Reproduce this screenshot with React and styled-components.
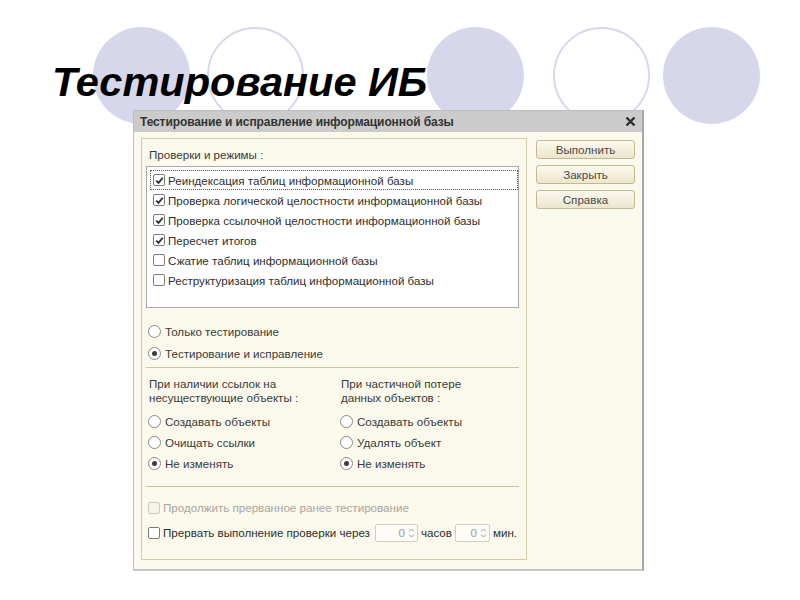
import React from 'react';
import styled, { createGlobalStyle, css } from 'styled-components';

const GlobalStyle = createGlobalStyle`
    html, body {
        margin: 0;
        padding: 0;
        background: #ffffff;
    }
    body {
        font-family: 'Liberation Sans', Arial, sans-serif;
    }
`;

const checks = [
    { label: 'Реиндексация таблиц информационной базы', checked: true, focused: true },
    { label: 'Проверка логической целостности информационной базы', checked: true },
    { label: 'Проверка ссылочной целостности информационной базы', checked: true },
    { label: 'Пересчет итогов', checked: true },
    { label: 'Сжатие таблиц информационной базы', checked: false },
    { label: 'Реструктуризация таблиц информационной базы', checked: false },
];

// кружки на фоне слайда
const circles = [
    { offset: 93, filled: true },
    { offset: 17, filled: false },
    { offset: 123, filled: true },
    { offset: 29, filled: false },
    { offset: 13, filled: true },
];

function CheckBox({ checked, disabled }) {
    return (
        <Box disabled={disabled}>
            {checked && (
                <svg width="9" height="9" viewBox="0 0 9 9">
                    <path
                        d="M1.2 4.6 L3.5 6.9 L7.8 1.8"
                        fill="none"
                        stroke="#2b2b2b"
                        strokeWidth="1.7"
                    />
                </svg>
            )}
        </Box>
    );
}

function Radio({ checked, label, tall }) {
    return (
        <RadioRow tall={tall}>
            <RadioCircle>{checked && <RadioDot />}</RadioCircle>
            <span>{label}</span>
        </RadioRow>
    );
}

function Spin({ width }) {
    return (
        <SpinBox width={width}>
            <SpinValue>0</SpinValue>
            <SpinArrows>
                <svg width="7" height="12" viewBox="0 0 7 12">
                    <path d="M1 4.5 L3.5 2 L6 4.5" fill="none" stroke="#9a9a9a" strokeWidth="1" />
                    <path d="M1 7.5 L3.5 10 L6 7.5" fill="none" stroke="#9a9a9a" strokeWidth="1" />
                </svg>
            </SpinArrows>
        </SpinBox>
    );
}

function App() {
    return (
        <>
            <GlobalStyle />
            <Slide>
                <Header>
                    <CircleRow>
                        {circles.map((c, i) => (
                            <Circle key={i} offset={c.offset} filled={c.filled} />
                        ))}
                    </CircleRow>
                    <Title>Тестирование ИБ</Title>
                </Header>
                <Dialog>
                    <TitleBar>
                        <TitleText>Тестирование и исправление информационной базы</TitleText>
                        <Close>
                            <svg width="11" height="11" viewBox="0 0 11 11">
                                <path d="M1.5 1.5 L9.5 9.5 M9.5 1.5 L1.5 9.5" stroke="#2e2e2e" strokeWidth="2.4" />
                            </svg>
                        </Close>
                    </TitleBar>
                    <Body>
                        <Frame>
                            <Caption>Проверки и режимы :</Caption>
                            <ListBox>
                                {checks.map(item => (
                                    <ListItem key={item.label} focused={item.focused}>
                                        <CheckBox checked={item.checked} />
                                        <span>{item.label}</span>
                                    </ListItem>
                                ))}
                            </ListBox>
                            <ModeGroup>
                                <Radio label="Только тестирование" tall />
                                <Radio label="Тестирование и исправление" checked tall />
                            </ModeGroup>
                            <Separator gap={3} />
                            <Columns>
                                <Column>
                                    <ColumnTitle>
                                        При наличии ссылок на
                                        <br />
                                        несуществующие объекты :
                                    </ColumnTitle>
                                    <Radio label="Создавать объекты" />
                                    <Radio label="Очищать ссылки" />
                                    <Radio label="Не изменять" checked />
                                </Column>
                                <Column>
                                    <ColumnTitle>
                                        При частичной потере
                                        <br />
                                        данных объектов :
                                    </ColumnTitle>
                                    <Radio label="Создавать объекты" />
                                    <Radio label="Удалять объект" />
                                    <Radio label="Не изменять" checked />
                                </Column>
                            </Columns>
                            <Separator gap={12} />
                            <OptionRow disabled first>
                                <CheckBox disabled />
                                <span>Продолжить прерванное ранее тестирование</span>
                            </OptionRow>
                            <OptionRow>
                                <CheckBox />
                                <OptionText>Прервать выполнение проверки через</OptionText>
                                <Spin width={43} />
                                <Unit>часов</Unit>
                                <Spin width={35} />
                                <Unit>мин.</Unit>
                            </OptionRow>
                        </Frame>
                        <Buttons>
                            <Button>Выполнить</Button>
                            <Button>Закрыть</Button>
                            <Button>Справка</Button>
                        </Buttons>
                    </Body>
                </Dialog>
            </Slide>
        </>
    );
}

export default App;

const Slide = styled.div`
    width: 800px;
    height: 600px;
    box-sizing: border-box;
    padding-top: 27px;
    background: #ffffff;
    overflow: hidden;
`;

const Header = styled.div`
    position: relative;
    height: 83px;
`;

const CircleRow = styled.div`
    display: flex;
`;

const Circle = styled.div`
    flex: none;
    width: 97px;
    height: 97px;
    margin-left: ${props => props.offset}px;
    border-radius: 50%;
    box-sizing: border-box;
    ${props =>
        props.filled
            ? css`
                  background: #d7d7eb;
              `
            : css`
                  border: 2px solid #d8d8ea;
                  background: #ffffff;
              `}
`;

const Title = styled.h1`
    position: absolute;
    left: 52px;
    top: 34px;
    margin: 0;
    font-family: 'Liberation Sans', Arial, sans-serif;
    font-size: 41.5px;
    line-height: 1;
    font-weight: bold;
    font-style: italic;
    color: #000000;
`;

const Dialog = styled.div`
    position: relative;
    margin-left: 133px;
    width: 511px;
    height: 461px;
    box-sizing: border-box;
    border: 1px solid #bdbdbd;
    border-right: 2px solid #a6a6a6;
    border-bottom: 2px solid #c4c4c4;
    background: #fbf9ec;
    font-family: 'Liberation Sans', Arial, sans-serif;
    font-size: 11.6px;
    color: #3a3a3a;
`;

const TitleBar = styled.div`
    display: flex;
    align-items: center;
    justify-content: space-between;
    height: 21px;
    padding: 0 5px 0 6px;
    background: #cbcbcb;
`;

const TitleText = styled.div`
    font-size: 12px;
    font-weight: bold;
    color: #333333;
    letter-spacing: -0.1px;
`;

const Close = styled.div`
    display: flex;
    align-items: center;
    padding-right: 1px;
`;

const Body = styled.div`
    display: flex;
    align-items: flex-start;
    padding: 6px 0 0 7px;
`;

const Frame = styled.div`
    width: 386px;
    height: 422px;
    box-sizing: border-box;
    border: 1px solid #d3ccaa;
    padding: 9px 7px 0 4px;
`;

const Caption = styled.div`
    line-height: 14px;
    margin: 0 0 4px 3px;
`;

const ListBox = styled.div`
    height: 142px;
    box-sizing: border-box;
    border: 1px solid #a9a9a9;
    background: #ffffff;
    padding-top: 3px;
`;

const ListItem = styled.div`
    display: flex;
    align-items: center;
    gap: 3px;
    height: 20px;
    box-sizing: border-box;
    margin: 0 0 0 3px;
    padding-left: 2px;
    color: #2e2e2e;
    border: 1px dotted transparent;
    ${props =>
        props.focused &&
        css`
            border-color: #5a5a5a;
        `}
`;

const Box = styled.span`
    flex: none;
    display: inline-flex;
    align-items: center;
    justify-content: center;
    width: 12px;
    height: 12px;
    box-sizing: border-box;
    border: 1px solid ${props => (props.disabled ? '#cfcbbd' : '#7c7c7c')};
    border-radius: 2px;
    background: ${props => (props.disabled ? '#f6f4ea' : '#ffffff')};
`;

const ModeGroup = styled.div`
    margin-top: 12px;
`;

const RadioRow = styled.div`
    display: flex;
    align-items: center;
    gap: 4px;
    height: ${props => (props.tall ? '22px' : '21px')};
    padding-left: 2px;
    white-space: nowrap;
`;

const RadioCircle = styled.span`
    flex: none;
    display: inline-flex;
    align-items: center;
    justify-content: center;
    width: 13px;
    height: 13px;
    box-sizing: border-box;
    border: 1px solid #8a8a8a;
    border-radius: 50%;
    background: #ffffff;
`;

const RadioDot = styled.span`
    width: 5px;
    height: 5px;
    border-radius: 50%;
    background: #3c3c3c;
`;

const Separator = styled.div`
    height: 1px;
    background: #c9c3a3;
    margin-top: ${props => props.gap}px;
`;

const Columns = styled.div`
    display: grid;
    grid-template-columns: 192px 1fr;
    margin-top: 9px;
`;

const Column = styled.div`
    display: flex;
    flex-direction: column;
`;

const ColumnTitle = styled.div`
    line-height: 14px;
    padding-left: 3px;
    margin-bottom: 6px;
`;

const OptionRow = styled.div`
    display: flex;
    align-items: center;
    height: 25px;
    padding-left: 2px;
    white-space: nowrap;
    margin-top: ${props => (props.first ? '8px' : '0')};
    color: ${props => (props.disabled ? '#a9a6a0' : '#2e2e2e')};
    & > span:first-child {
        margin-right: 3px;
    }
`;

const OptionText = styled.span`
    margin-right: 5px;
`;

const SpinBox = styled.span`
    flex: none;
    display: inline-flex;
    align-items: center;
    justify-content: flex-end;
    width: ${props => props.width}px;
    height: 18px;
    box-sizing: border-box;
    border: 1px solid #d2d0c6;
    border-radius: 2px;
    background: #fdfcf6;
    color: #9a9a9a;
`;

const SpinValue = styled.span`
    padding-right: 3px;
`;

const SpinArrows = styled.span`
    display: flex;
    align-items: center;
    padding-right: 2px;
`;

const Unit = styled.span`
    margin: 0 3px;
    color: #2e2e2e;
`;

const Buttons = styled.div`
    display: flex;
    flex-direction: column;
    gap: 6px;
    margin: 2px 0 0 9px;
`;

const Button = styled.div`
    width: 99px;
    height: 19px;
    box-sizing: border-box;
    display: flex;
    align-items: center;
    justify-content: center;
    border: 1px solid #c2b98f;
    border-radius: 3px;
    background: linear-gradient(#fbf9ee, #ece6cc);
    color: #4a4a4a;
    font-size: 11.6px;
`;
